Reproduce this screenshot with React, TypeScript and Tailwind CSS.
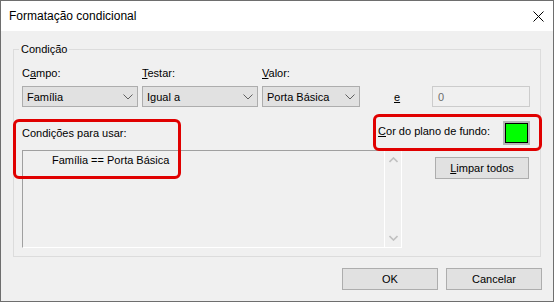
import React from "react";

function Chevron() {
  return (
    <svg width="10" height="6" viewBox="0 0 10 6" className="shrink-0">
      <path d="M0.5 0.5 L5 5 L9.5 0.5" fill="none" stroke="#606060" strokeWidth="1" />
    </svg>
  );
}

function Combo({ value, width }: { value: string; width: string }) {
  return (
    <div className={`${width} h-[21px] flex items-center justify-between pl-[4px] pr-[4px] bg-[#e1e1e1] border border-[#adadad]`}>
      <span className="whitespace-nowrap">{value}</span>
      <Chevron />
    </div>
  );
}

function Arrow({ up }: { up?: boolean }) {
  return (
    <svg width="9" height="6" viewBox="0 0 9 6">
      <path d={up ? "M0.5 5 L4.5 1 L8.5 5" : "M0.5 1 L4.5 5 L8.5 1"} fill="none" stroke="#c0c0c0" strokeWidth="1.6" />
    </svg>
  );
}

export default function App() {
  return (
    <div className="relative w-[554px] h-[302px] bg-[#f0f0f0] border border-[#6e6e6e] flex flex-col text-[11px] leading-[16px] text-black overflow-hidden font-['Liberation_Sans',Arial,sans-serif]">
      {/* Title bar */}
      <div className="h-[30px] bg-white flex items-center justify-between pl-[8px] pr-[9px] shrink-0">
        <span className="text-[12px]">Formatação condicional</span>
        <svg width="11" height="11" viewBox="0 0 11 11">
          <path d="M0.5 0.5 L10.5 10.5 M10.5 0.5 L0.5 10.5" stroke="#000" strokeWidth="1" />
        </svg>
      </div>

      {/* Group box */}
      <fieldset className="mx-[12px] mt-[10px] h-[216px] border border-[#dcdcdc] pl-[8px] pr-[10px] shrink-0">
        <legend className="ml-[-3px] px-[2px]">Condição</legend>

        <div className="flex items-end mt-[8px]">
          <div className="flex flex-col gap-[5px] mr-[4px]">
            <span>
              C<span className="underline">a</span>mpo:
            </span>
            <Combo value="Família" width="w-[116px]" />
          </div>
          <div className="flex flex-col gap-[5px] mr-[4px]">
            <span>
              <span className="underline">T</span>estar:
            </span>
            <Combo value="Igual a" width="w-[116px]" />
          </div>
          <div className="flex flex-col gap-[5px]">
            <span>
              <span className="underline">V</span>alor:
            </span>
            <Combo value="Porta Básica" width="w-[98px]" />
          </div>
          <span className="underline ml-[34px] h-[21px] flex items-center">e</span>
          <div className="ml-auto w-[98px] h-[21px] flex items-center pl-[5px] bg-[#f0f0f0] border border-[#cccccc] text-[#6d6d6d]">
            0
          </div>
        </div>

        <div className="mt-[14px] h-[24px] flex items-center justify-between">
          <span>Condições para usar:</span>
          <div className="flex items-center">
            <span className="whitespace-nowrap pb-[4px]">
              <span className="underline">C</span>or do plano de fundo:
            </span>
            <div className="ml-[13px] w-[27px] h-[24px] shrink-0 border-2 border-[#b4b4b4] bg-[#e8e8e8]">
              <div className="w-full h-full border border-black bg-[#00ff00]" />
            </div>
          </div>
        </div>

        <div className="mt-[5px] flex items-start justify-between">
          <div className="w-[380px] h-[98px] flex border-t border-l border-[#a0a0a0] border-b-white border-r-white border-b border-r">
            <div className="flex-1 pl-[29px] pt-[1px] whitespace-nowrap">Família == Porta Básica</div>
            <div className="w-[17px] border-l border-white flex flex-col items-center justify-between pt-[6px] pb-[6px]">
              <Arrow up />
              <Arrow />
            </div>
          </div>
          <button className="mt-[7px] mr-[1px] w-[94px] h-[22px] bg-[#e1e1e1] border border-[#adadad] whitespace-nowrap">
            <span className="underline">L</span>impar todos
          </button>
        </div>
      </fieldset>

      {/* Bottom buttons */}
      <div className="flex justify-end gap-[8px] mt-[11px] pr-[11px]">
        <button className="w-[96px] h-[22px] bg-[#e1e1e1] border border-[#adadad]">OK</button>
        <button className="w-[96px] h-[22px] bg-[#e1e1e1] border border-[#adadad]">Cancelar</button>
      </div>

      {/* Annotation highlights */}
      <div className="absolute left-[12px] top-[118px] w-[168px] h-[60px] border-[3px] border-[#e00000] rounded-[6px] pointer-events-none" />
      <div className="absolute left-[372px] top-[113px] w-[169px] h-[37px] border-[3px] border-[#e00000] rounded-[6px] pointer-events-none" />
    </div>
  );
}
